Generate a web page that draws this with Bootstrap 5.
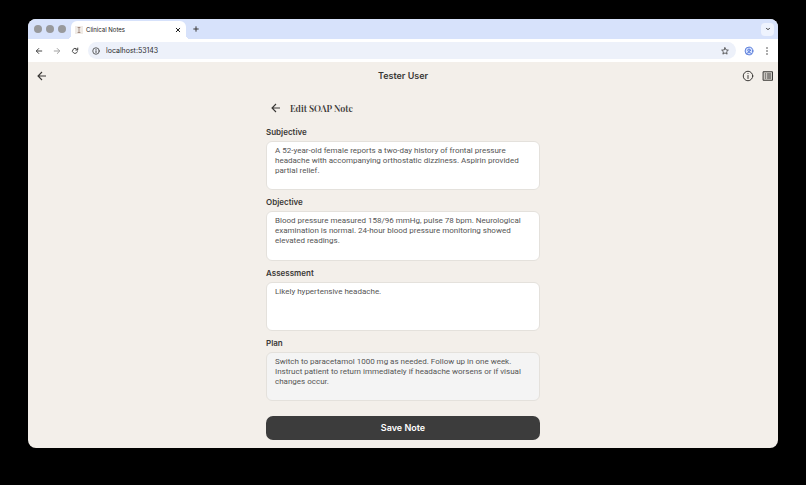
<!DOCTYPE html>
<html lang="en">
<head>
<meta charset="utf-8">
<meta name="viewport" content="width=device-width, initial-scale=1">
<title>Clinical Notes</title>
<link href="https://cdn.jsdelivr.net/npm/bootstrap@5.3.0/dist/css/bootstrap.min.css" rel="stylesheet">
<style>
body{background:#000;font-family:Inter,"Liberation Sans",sans-serif;color:#3a3836;font-size:8px;line-height:12px;padding:19px 28px 37px}
svg{display:block;fill:none;stroke:currentColor;stroke-width:2;stroke-linecap:round;stroke-linejoin:round}
button{line-height:12px}
.icon-btn{border:0;background:none;padding:0;color:inherit}
.window{background:#f3efea;border-radius:8px}
.tab-strip{background:#d7e2fb;height:20px;padding-right:4px}
.lights{gap:4px;padding:0 5px 0 6px}
.light{width:8px;height:8px;border-radius:50%;background:#98999c}
.browser-tab{width:115px;height:18px;background:#fff;border-radius:6px 6px 0 0;font-size:6px;padding:0 5px 0 4px;color:#222;position:relative}
.browser-tab::before,.browser-tab::after{content:"";position:absolute;bottom:0;width:4px;height:4px}
.browser-tab::before{left:-4px;background:radial-gradient(circle at 0 0,transparent 4px,#fff 4px)}
.browser-tab::after{right:-4px;background:radial-gradient(circle at 100% 0,transparent 4px,#fff 4px)}
.tab-title{margin-left:3px}
.new-tab{margin-left:7px}
.tab-menu{width:13px;height:13px;border-radius:4px;background:#eef3fe;color:#333}
.toolbar{background:#fff;height:23px;padding:0 6px;color:#474747}
.address{background:#edf1fa;border-radius:9px;height:17px;padding:0 7px 0 4px;margin-left:8px;margin-right:8px}
.address input{border:0;background:none;outline:0;font-size:7px;line-height:12px;padding:0;color:#2b2b2e;min-width:0;margin-left:6px}
.app-bar{height:28px;padding:0 4px}
.app-bar h1{font-size:9px;line-height:12px;font-weight:600}
.side{width:32px}
.arrow{stroke-width:2.200;stroke-linecap:butt;stroke-linejoin:miter}
.note-form{width:100%;max-width:274px;padding:8px 0}
.note-title{font-family:"Playfair Display","Liberation Serif",serif;font-size:9px;line-height:20px;font-weight:600}
.fields{gap:6px;margin-top:8px}
.note-form label{font-size:8px;line-height:12px;font-weight:600;margin-bottom:3px}
.note-form textarea{font-family:Roboto,Inter,sans-serif;font-size:8px;line-height:10px;padding:4px 8px;border:1px solid #e4e1dc;border-radius:6px;color:#555;resize:none;overflow:hidden;min-height:49px;background:#fff}
.note-form textarea.muted-field{background:#f4f4f4}
.save-btn{background:#3c3c3c;color:#fff;border:0;border-radius:7px;height:24px;margin-top:15px;font-size:9px;font-weight:600;padding:0}
.save-btn:hover{background:#2c2c2c;color:#fff}
</style>
</head>
<body class="d-flex flex-column min-vh-100 m-0">
<div class="window d-flex flex-column flex-grow-1 overflow-hidden">
  <header>
    <div class="tab-strip d-flex align-items-center">
      <div class="lights d-flex"><span class="light"></span><span class="light"></span><span class="light"></span></div>
      <div class="browser-tab d-flex align-items-center align-self-end">
        <svg width="8" height="8" viewBox="0 0 16 16"><path d="M0 0h16v16H0z" fill="#f0ebe6" stroke="none"/><path d="M6 3h4M8 3v10M6 13h4" stroke="#94786b" stroke-width="1.5"/></svg>
        <span class="tab-title flex-grow-1">Clinical Notes</span>
        <button class="icon-btn" type="button" aria-label="Close tab"><svg width="6" height="6" viewBox="0 0 12 12"><path d="M2.500 2.500l7 7M9.500 2.500l-7 7"/></svg></button>
      </div>
      <button class="icon-btn new-tab" type="button" aria-label="New tab"><svg width="6" height="6" viewBox="0 0 12 12" stroke-width="1.700"><path d="M6 1.500v9M1.500 6h9"/></svg></button>
      <button class="icon-btn tab-menu ms-auto d-flex align-items-center justify-content-center" type="button" aria-label="Search tabs"><svg width="6" height="6" viewBox="0 0 12 12"><path d="M3 4.500l3 3 3-3"/></svg></button>
    </div>
    <div class="toolbar d-flex align-items-center">
      <button class="icon-btn" type="button" aria-label="Back"><svg width="10" height="10" viewBox="0 0 20 20"><path d="M15.500 10H5M9.500 5l-5 5 5 5"/></svg></button>
      <button class="icon-btn ms-2 opacity-50" type="button" aria-label="Forward"><svg width="10" height="10" viewBox="0 0 20 20"><path d="M4.500 10H15M10.500 5l5 5-5 5"/></svg></button>
      <button class="icon-btn ms-2" type="button" aria-label="Reload"><svg width="10" height="10" viewBox="0 0 20 20"><path d="M14.800 11.500a5 5 0 1 1-1-5l1.700 1.500M15.500 4v4h-4"/></svg></button>
      <div class="address d-flex align-items-center flex-grow-1">
        <svg width="8" height="8" viewBox="0 0 16 16"><circle cx="8" cy="8" r="6.500" stroke-width="1.700"/><path d="M8 7.500v3.500M8 4.800v.1"/></svg>
        <input class="flex-grow-1" type="text" value="localhost:53143" aria-label="Address">
        <button class="icon-btn" type="button" aria-label="Bookmark"><svg width="8" height="8" viewBox="0 0 16 16"><path d="M8 1.500l2 4.300 4.700.5-3.500 3.200 1 4.700L8 11.800l-4.200 2.400 1-4.700L1.300 6.300 6 5.800z" stroke-width="1.700"/></svg></button>
      </div>
      <button class="icon-btn" type="button" aria-label="Profile"><svg width="10" height="10" viewBox="0 0 20 20"><g stroke="#4a6fd6" stroke-width="1.800"><circle cx="10" cy="10" r="7.800" fill="#dbe6ff"/><circle cx="10" cy="8.500" r="2.500"/><path d="M5 15.500c2-3.500 8-3.500 10 0"/></g></svg></button>
      <button class="icon-btn ms-2" type="button" aria-label="Browser menu"><svg width="10" height="10" viewBox="0 0 20 20"><g fill="#444" stroke="none"><circle cx="10" cy="4" r="1.600"/><circle cx="10" cy="10" r="1.600"/><circle cx="10" cy="16" r="1.600"/></g></svg></button>
    </div>
  </header>
  <div class="app-bar d-flex align-items-center justify-content-between">
    <div class="side ps-1"><button class="icon-btn d-block" type="button" aria-label="Go back"><svg class="arrow" width="12" height="12" viewBox="0 0 24 24"><path d="M20 12H5M12 4l-8 8 8 8"/></svg></button></div>
    <h1 class="m-0">Tester User</h1>
    <div class="side d-flex justify-content-between">
      <button class="icon-btn" type="button" aria-label="Information"><svg width="12" height="12" viewBox="0 0 24 24"><circle cx="12" cy="12" r="9.500"/><path d="M12 11v6M12 7v.1"/></svg></button>
      <button class="icon-btn" type="button" aria-label="Notes list"><svg width="12" height="12" viewBox="0 0 24 24"><path d="M3 3.500h18v17H3z" fill="#d6d2cd"/><path d="M6.500 8h1M6.500 12h1M6.500 16h1M11 8h6.500M11 12h6.500M11 16h6.500"/></svg></button>
    </div>
  </div>
  <form class="note-form mx-auto d-flex flex-column flex-grow-1">
    <div class="d-flex align-items-center ps-1">
      <button class="icon-btn" type="button" aria-label="Back to notes"><svg class="arrow" width="12" height="12" viewBox="0 0 24 24"><path d="M20 12H5M12 4l-8 8 8 8"/></svg></button>
      <h2 class="note-title m-0 ms-2">Edit SOAP Note</h2>
    </div>
    <div class="fields d-flex flex-column flex-grow-1">
      <div class="d-flex flex-column flex-fill">
        <label for="subjective">Subjective</label>
        <textarea class="flex-fill w-100" id="subjective" rows="3">A 52-year-old female reports a two-day history of frontal pressure headache with accompanying orthostatic dizziness. Aspirin provided partial relief.</textarea>
      </div>
      <div class="d-flex flex-column flex-fill">
        <label for="objective">Objective</label>
        <textarea class="flex-fill w-100" id="objective" rows="3">Blood pressure measured 158/96 mmHg, pulse 78 bpm. Neurological examination is normal. 24-hour blood pressure monitoring showed elevated readings.</textarea>
      </div>
      <div class="d-flex flex-column flex-fill">
        <label for="assessment">Assessment</label>
        <textarea class="flex-fill w-100" id="assessment" rows="3">Likely hypertensive headache.</textarea>
      </div>
      <div class="d-flex flex-column flex-fill">
        <label for="plan">Plan</label>
        <textarea class="muted-field flex-fill w-100" id="plan" rows="3">Switch to paracetamol 1000 mg as needed. Follow up in one week. Instruct patient to return immediately if headache worsens or if visual changes occur.</textarea>
      </div>
    </div>
    <button class="btn save-btn w-100" type="submit">Save Note</button>
  </form>
</div>
<script src="https://cdn.jsdelivr.net/npm/bootstrap@5.3.0/dist/js/bootstrap.bundle.min.js"></script>
</body>
</html>
